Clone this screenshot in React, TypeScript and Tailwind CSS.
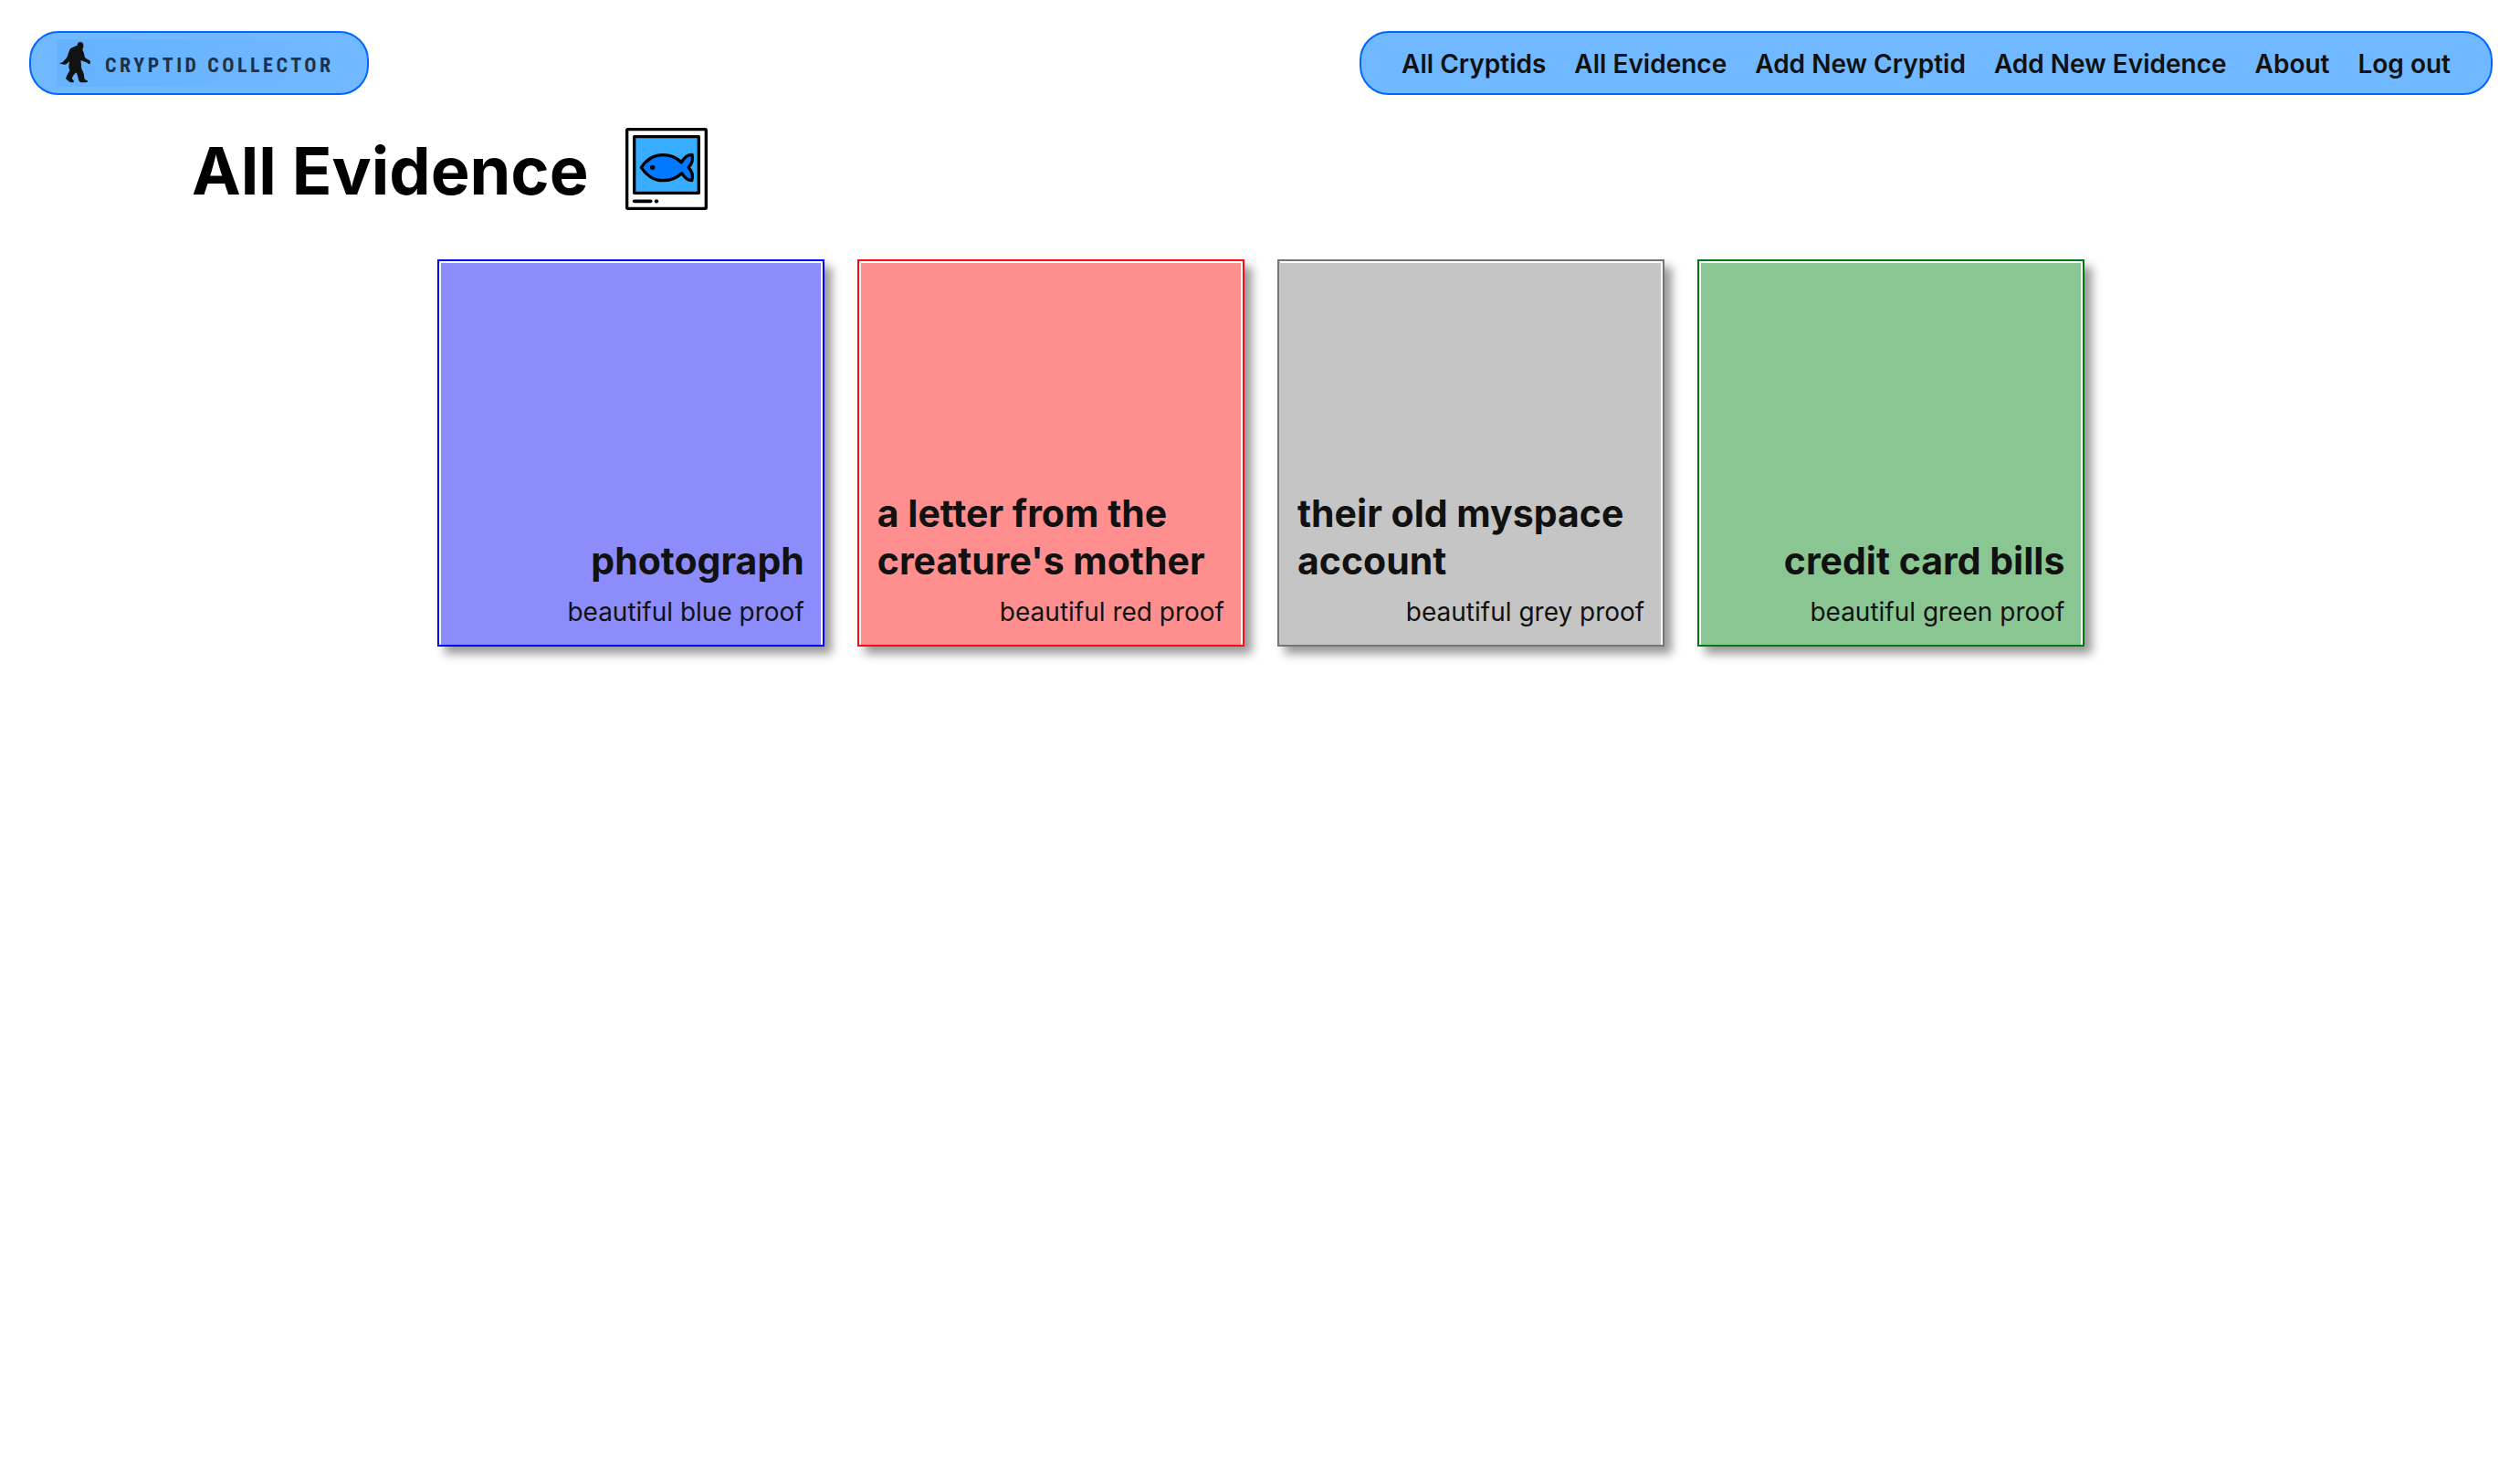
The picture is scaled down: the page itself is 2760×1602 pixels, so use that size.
const navLinks = ['All Cryptids', 'All Evidence', 'Add New Cryptid', 'Add New Evidence', 'About', 'Log out'];

const evidence = [
  { title: 'photograph', proof: 'beautiful blue proof', border: 'border-[#0000ff]', fill: 'bg-[#8c8cfc]', gap: 'border-white' },
  { title: "a letter from the creature's mother", proof: 'beautiful red proof', border: 'border-[#ff0a12]', fill: 'bg-[#ff8f8f]', gap: 'border-white' },
  { title: 'their old myspace account', proof: 'beautiful grey proof', border: 'border-[#757575]', fill: 'bg-[#c5c5c5]', gap: 'border-white border-l-[#c5c5c5]' },
  { title: 'credit card bills', proof: 'beautiful green proof', border: 'border-[#007a14]', fill: 'bg-[#8ac692]', gap: 'border-white' },
];

function Bigfoot() {
  return (
    <svg viewBox="126 78 120 156" className="h-[52px] w-10" fill="#101214" aria-hidden="true">
      <path d="M204 87C198 87 194 91 194 98C189 99 180 103 172 108C167 114 164 125 162 133C159 141 151 148 146 153C143 155 137 155 136 157C137 160 141 159 144 160C149 161 155 162 159 159C163 157 165 153 168 151C168 158 165 165 166 171C167 175 169 178 169 181C167 186 163 190 161 195C159 199 156 204 157 209C160 211 164 213 166 216C170 220 177 221 182 219C184 216 182 212 178 209C176 206 177 203 179 200C182 195 187 191 190 187C194 192 195 199 197 206C198 211 199 215 203 219C211 220 221 220 228 218C230 215 227 213 223 212C219 211 217 208 217 204C216 197 216 190 212 183C208 177 206 170 207 163C207 158 205 152 206 147C211 149 218 152 224 154C228 156 229 160 234 160C238 157 238 152 235 148C230 145 223 141 219 138C217 131 217 124 213 117C211 113 211 111 212 107C214 105 215 102 214 98C214 91 210 87 204 87Z" />
    </svg>
  );
}

function FishPhoto() {
  return (
    <svg viewBox="42 30 270 270" className="size-[90px]" aria-hidden="true">
      <rect x="47" y="35" width="260" height="260" rx="3" fill="#fff" stroke="#000" strokeWidth="10" />
      <rect x="71" y="59" width="212" height="185" fill="#38acff" stroke="#000" strokeWidth="10" strokeLinejoin="round" />
      <path
        d="M94 160C108 139 133 119 165 119C188 119 210 128 226 143C234 129 245 118 261 118C265 133 262 147 249 160C262 173 265 188 260 203C246 203 235 192 227 179C211 194 188 203 165 203C133 203 108 182 94 160Z"
        fill="#0078ff"
        stroke="#000"
        strokeWidth="10"
        strokeLinejoin="round"
      />
      <circle cx="131" cy="160" r="8" />
      <path d="M71 271H125" stroke="#000" strokeWidth="11" strokeLinecap="round" />
      <circle cx="144" cy="271" r="6.5" />
    </svg>
  );
}

export default function App() {
  return (
    <div className="min-h-screen bg-white font-['Inter',sans-serif] text-[#111]">
      <header className="flex items-center justify-between pt-[34px] pr-[30px] pl-8">
        <a href="#" className="flex h-[70px] items-center rounded-[32px] border-2 border-[#0066ff] bg-[#70b8ff] pr-9 pl-7">
          <span className="flex h-[52px] items-center gap-[13px] bg-linear-to-r from-[#66b2ff] to-[#70b8ff]">
            <Bigfoot />
            <span className="pt-1 font-['Roboto_Condensed',Roboto,sans-serif] text-[22px] font-bold tracking-[0.16em] text-[#1c3248]">
              CRYPTID COLLECTOR
            </span>
          </span>
        </a>
        <nav className="flex h-[70px] items-center gap-[31px] rounded-[32px] border-2 border-[#0066ff] bg-[#70b8ff] px-11 pt-0.5 text-[28px] font-semibold">
          {navLinks.map((label) => (
            <a key={label} href="#">
              {label}
            </a>
          ))}
        </nav>
      </header>

      <main className="pl-0.5">
        <div className="mt-9 flex items-start gap-10 pl-[208px]">
          <h1 className="text-[72px] leading-[94px] font-bold text-black">All Evidence</h1>
          <FishPhoto />
        </div>

        <ul className="mx-auto mt-[50px] grid w-[65.44%] grid-cols-4 gap-9">
          {evidence.map((item) => (
            <li key={item.title} className={`aspect-square border-2 shadow-[8px_8px_10px_#999] ${item.border}`}>
              <div className={`flex h-full flex-col items-end justify-end gap-2.5 border-2 border-b-0 px-[18px] pb-4 ${item.gap} ${item.fill}`}>
                <h2 className="text-[41px] leading-[52px] font-bold">{item.title}</h2>
                <p className="text-[28px] leading-10">{item.proof}</p>
              </div>
            </li>
          ))}
        </ul>
      </main>
    </div>
  );
}
